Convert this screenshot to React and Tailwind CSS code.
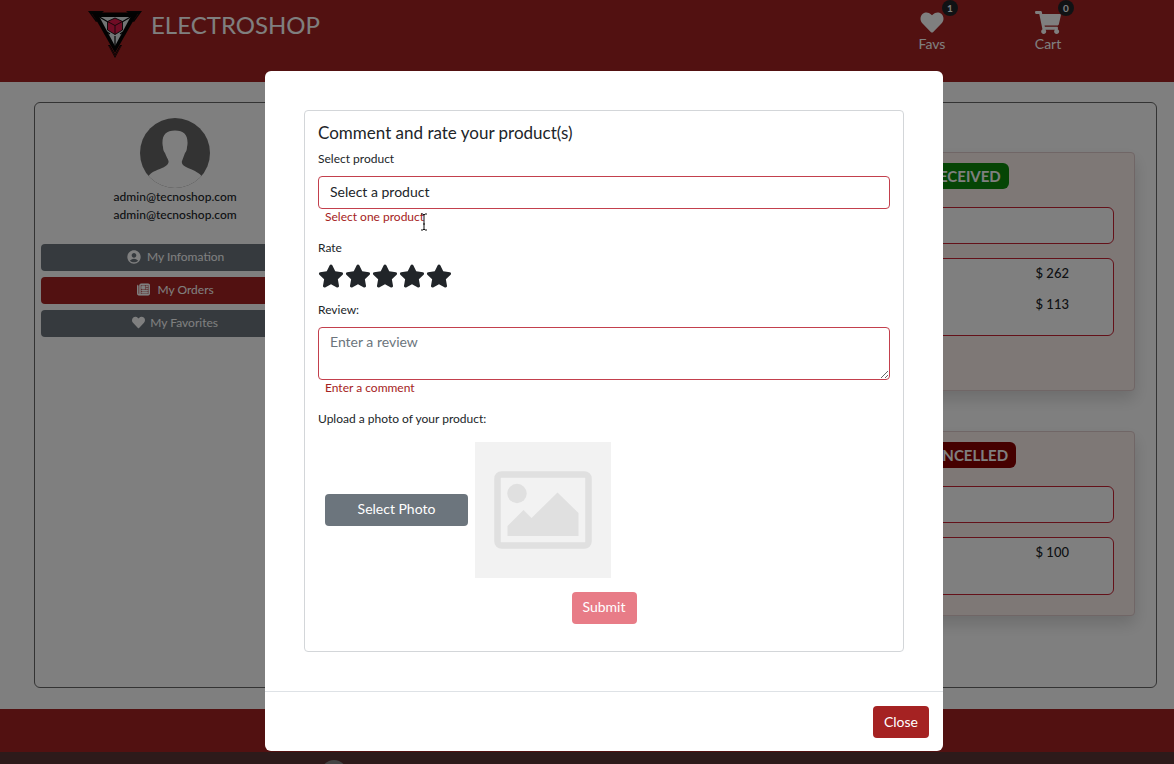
import { FaHeart, FaShoppingCart, FaStar } from "react-icons/fa";
import { FaRegNewspaper } from "react-icons/fa6";
import { MdAccountCircle } from "react-icons/md";

function Logo() {
  return (
    <svg viewBox="0 0 54 48" className="h-12 w-[54px] shrink-0" aria-hidden="true">
      <path d="M0 1H16L14 3H5L10 11L8 12Z M54 1H38L40 3H49L44 11L46 12Z" fill="#080808" />
      <path d="M4 4L11 13M50 4L43 13" stroke="#400c0c" strokeWidth="1" />
      <path d="M4 2.5H50L27 43Z" fill="#050505" />
      <path d="M20 35L27 48L34 35L32 35L27 44L22 35Z" fill="#050505" />
      <path d="M21 36L27 46L33 36" fill="none" stroke="#6b1414" strokeWidth=".6" />
      <path d="M11.5 7H42.5L27 36Z" fill="#e4e8ea" />
      <path d="M11.5 7L20 12M42.5 7L34 12M27 36V26M19 22L22 24M35 22L32 24" stroke="#050505" strokeWidth="1.2" />
      <path d="M27 8L34.5 11.5V20L27 24.500L19.500 20V11.500Z" fill="#e0184a" stroke="#0a0a0a" strokeWidth=".9" />
      <path d="M19.500 11.500L27 15.500L34.500 11.500M27 15.500V24.500" fill="none" stroke="#0a0a0a" strokeWidth=".8" />
    </svg>
  );
}

function HeaderLink({ icon, label, count }) {
  return (
    <a href="#" className="relative flex w-16 flex-col items-center text-[14px] leading-5 text-white">
      {icon}
      <span>{label}</span>
      <span className="absolute top-[-11px] right-1.5 flex h-4 w-4 items-center justify-center rounded-full bg-[#212529] text-[10px] font-bold">
        {count}
      </span>
    </a>
  );
}

function Avatar() {
  return (
    <svg viewBox="0 0 70 70" className="h-[70px] w-[70px]" role="img" aria-label="Profile picture">
      <defs>
        <clipPath id="avatar-circle">
          <circle cx="35" cy="35" r="35" />
        </clipPath>
      </defs>
      <g clipPath="url(#avatar-circle)">
        <rect width="70" height="70" fill="#666" />
        <path
          d="M35 12.500C26 12.500 22 17 22.500 26C22.500 27 22.800 28 23 29C23 32 24 34 25 35C26 38 28 41 28.500 43C29 46 26 48 22 50C16 52.500 11 54 8 59L5 72H65L62 59C60 55 55 53 48 50C44 48 41 46 42 43C43 40 44 38 45 35C46 34 47 32 47 29C47.200 28 47.500 27 47.500 26C48 17 44 12.500 35 12.500Z"
          fill="#fff"
        />
      </g>
    </svg>
  );
}

const menu = [
  { label: "My Infomation", icon: <MdAccountCircle size={16} />, look: "gap-[5px] bg-[#6c757d]" },
  { label: "My Orders", icon: <FaRegNewspaper size={13} stroke="currentColor" strokeWidth={24} />, look: "gap-2 bg-[#a52222]" },
  { label: "My Favorites", icon: <FaHeart size={13} />, look: "gap-[5px] bg-[#6c757d]" },
];

function Order({ status, look, prices, extra }) {
  return (
    <article className="rounded border border-[#e0cccc] bg-[#fdf0ed] px-5 shadow-[0_8px_16px_rgba(0,0,0,0.15)]">
      <div className="grid grid-cols-5 pt-2.5 pl-3">
        <span className={"col-span-2 col-start-4 justify-self-center rounded-md px-2 text-[15px] leading-[26px] font-bold text-white " + look}>
          {status}
        </span>
      </div>
      <div className="mt-[18px] h-[37px] rounded-md border border-[#c82333] bg-white" />
      <ul className="mt-3.5 flex min-h-[58px] flex-col items-end rounded-md border border-[#c82333] bg-white pr-11 pb-3.5 text-[13px] font-medium">
        {prices.map((p) => (
          <li key={p} className="h-[31px] leading-7">{p}</li>
        ))}
      </ul>
      <div className={extra} />
    </article>
  );
}

export default function App() {
  return (
    <div className="relative flex h-screen min-h-[764px] flex-col overflow-hidden bg-white font-[Lato,'Open_Sans',sans-serif] text-[#212529]">
      <header className="flex h-[82px] shrink-0 items-start bg-[#a52222] pt-2.5 pl-[88px] text-white">
        <Logo />
        <span className="grow pl-[9px] text-[24px] leading-[30px]">ELECTROSHOP</span>
        <nav className="flex gap-[52px] pt-px pr-[94px]">
          <HeaderLink icon={<FaHeart size={24} className="h-[23px]" />} label="Favs" count="1" />
          <HeaderLink icon={<FaShoppingCart size={26} className="h-[23px]" />} label="Cart" count="0" />
        </nav>
      </header>

      <main className="flex grow flex-col pt-5 pr-[17px] pb-[21px] pl-[34px]">
        <div className="grid grow grid-cols-4 rounded-md border border-[#666]">
          <aside className="flex flex-col px-1.5 pt-[15px]">
            <div className="flex flex-col items-center text-[12px] leading-[18px] font-medium">
              <Avatar />
              <span>admin@tecnoshop.com</span>
              <span>admin@tecnoshop.com</span>
            </div>
            <nav className="mt-5 flex flex-col gap-1.5">
              {menu.map((m) => (
                <button key={m.label} type="button" className={"flex h-[27px] items-center justify-center rounded pb-0.5 text-[12px] text-white " + m.look}>
                  {m.icon}
                  {m.label}
                </button>
              ))}
            </nav>
          </aside>
          <section className="col-span-3 flex flex-col gap-10 px-[21px] pt-[49px]">
            <Order status="RECEIVED" look="bg-[#0a8a0a]" prices={["$ 262", "$ 113"]} extra="h-[54px]" />
            <Order status="CANCELLED" look="bg-[#8b0000]" prices={["$ 100"]} extra="h-5" />
          </section>
        </div>
      </main>

      <footer className="flex h-[55px] shrink-0 flex-col bg-[#a52222]">
        <div className="mt-[43px] grow overflow-hidden bg-[#5a3535] pl-[321px]">
          <div className="mt-2 h-[26px] w-[26px] rounded-full bg-[#8a8a8a]" />
        </div>
      </footer>

      <div className="absolute inset-0 flex items-start justify-center bg-black/50 pt-[71px] pl-[34px]">
        <div role="dialog" aria-modal="true" aria-labelledby="review-title" className="w-full max-w-[678px] rounded-md bg-white">
          <div className="px-[39px] pt-[39px] pb-[39px]">
            <form className="flex flex-col rounded border border-[#d3d6d9] px-[13px] pt-2.5 pb-[27px] text-[12px] leading-5">
              <h2 id="review-title" className="text-[17px] leading-6">Comment and rate your product(s)</h2>
              <label htmlFor="product" className="mt-1">Select product</label>
              <select id="product" className="mt-[7px] h-[33px] appearance-none rounded border border-[#c3404d] bg-white px-[11px] pb-0.5 text-[14px]">
                <option>Select a product</option>
              </select>
              <div className="relative px-[7px] leading-4 text-[#a52222]">
                Select one product
                <svg viewBox="0 0 8 18" className="absolute top-1 left-[102px] h-[18px] w-2" aria-hidden="true">
                  <path d="M1 1H3L4 2L5 1H7M4 2V16M1 17H3L4 16L5 17H7M3 11H5" fill="none" stroke="#111" />
                </svg>
              </div>
              <span className="mt-[13px]">Rate</span>
              <div className="mt-[5px] flex gap-px">
                {[1, 2, 3, 4, 5].map((n) => (
                  <button key={n} type="button" aria-label={"Rate " + n}>
                    <FaStar size={26} />
                  </button>
                ))}
              </div>
              <label htmlFor="review" className="mt-[11px]">Review:</label>
              <textarea id="review" placeholder="Enter a review" className="mt-[7px] h-[53px] resize rounded border border-[#c3404d] px-[11px] py-1 text-[14px] placeholder:text-[#6c757d]" />
              <div className="px-[7px] leading-4 text-[#a52222]">Enter a comment</div>
              <span className="mt-[13px]">Upload a photo of your product:</span>
              <div className="mt-[13px] flex items-center gap-[7px] pl-[7px]">
                <button type="button" className="h-8 w-[143px] rounded bg-[#6c757d] pb-0.5 text-[14px] text-white">Select Photo</button>
                <svg viewBox="0 0 136 136" className="h-[136px] w-[136px]" role="img" aria-label="No photo">
                  <rect width="136" height="136" fill="#f2f2f2" />
                  <rect x="22.500" y="32.500" width="91" height="71" rx="4" fill="none" stroke="#e0e0e0" strokeWidth="6.500" />
                  <circle cx="42" cy="51.500" r="9.700" fill="#e0e0e0" />
                  <path d="M32.500 94V84L48.500 68L56.500 76L82.500 50.500L103.500 71V94Z" fill="#e0e0e0" />
                </svg>
              </div>
              <button type="submit" className="mt-3.5 h-8 self-center rounded bg-[#e87c87] px-[11px] pb-0.5 text-[14px] text-white">Submit</button>
            </form>
          </div>
          <div className="flex justify-end border-t border-[#dee2e6] px-3.5 pt-3.5 pb-[13px]">
            <button type="button" className="h-8 rounded bg-[#a52222] px-[11px] pb-0.5 text-[14px] text-white">Close</button>
          </div>
        </div>
      </div>
    </div>
  );
}
